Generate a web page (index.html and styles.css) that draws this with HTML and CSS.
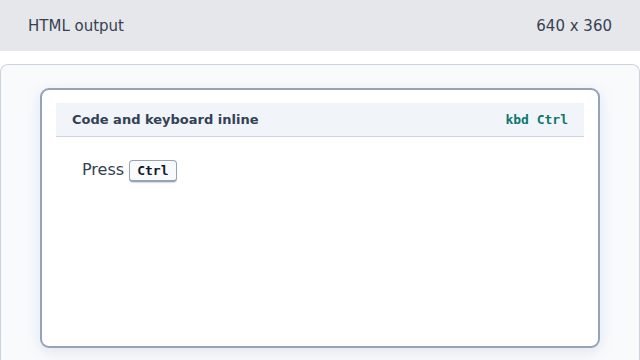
FILE: index.html
```html
<!DOCTYPE html>
<html>
<head>
<meta charset="utf-8">
<link rel="stylesheet" href="styles.css">
</head>
<body>
<div class="topbar">
  <span class="title">HTML output</span>
  <span class="size">640 x 360</span>
</div>
<div class="panel">
  <div class="card">
    <div class="card-head">
      <span class="card-title">Code and keyboard inline</span>
      <span class="card-tag">kbd Ctrl</span>
    </div>
    <div class="card-body">
      <span class="press">Press</span> <kbd class="key">Ctrl</kbd>
    </div>
  </div>
</div>
</body>
</html>
```
FILE: styles.css
```css
html, body {
  margin: 0;
  padding: 0;
  background: #ffffff;
  font-family: "DejaVu Sans", sans-serif;
  overflow: hidden;
  height: 360px;
}
.topbar {
  height: 51px;
  background: #e5e7eb;
  display: flex;
  align-items: center;
  justify-content: space-between;
  padding: 0 28px;
  font-size: 15px;
  color: #374151;
}
.panel {
  margin-top: 13px;
  height: 296px;
  background: #f8fafc;
  border: 1px solid #cbd5e1;
  border-bottom: none;
  border-radius: 8px 8px 0 0;
  padding: 23px 39px 0 39px;
  box-sizing: border-box;
}
.card {
  height: 260px;
  box-sizing: border-box;
  background: #ffffff;
  border: 2px solid #94a3b8;
  border-radius: 9px;
  padding: 13px 14px 13px 14px;
  box-shadow: 0 4px 14px rgba(100, 116, 139, 0.15);
}
.card-head {
  height: 33px;
  background: #f1f5f9;
  border-bottom: 1px solid #cbd5e1;
  display: flex;
  align-items: center;
  justify-content: space-between;
  padding: 0 16px;
}
.card-title {
  font-size: 13px;
  font-weight: 700;
  color: #334155;
}
.card-tag {
  font-family: "DejaVu Sans Mono", monospace;
  font-size: 13px;
  font-weight: 700;
  color: #0f766e;
}
.card-body {
  padding: 22px 26px;
  font-size: 16px;
  color: #334155;
  line-height: 22px;
}
.key {
  display: inline-block;
  font-family: "DejaVu Sans Mono", monospace;
  font-size: 13px;
  font-weight: 700;
  color: #0f172a;
  background: #f8fafc;
  border: 1px solid #94a3b8;
  border-bottom-width: 2px;
  border-radius: 4px;
  padding: 0 7px;
  line-height: 19px;
  vertical-align: 0;
  box-shadow: 0 1px 1px rgba(100, 116, 139, 0.25);
}
```
